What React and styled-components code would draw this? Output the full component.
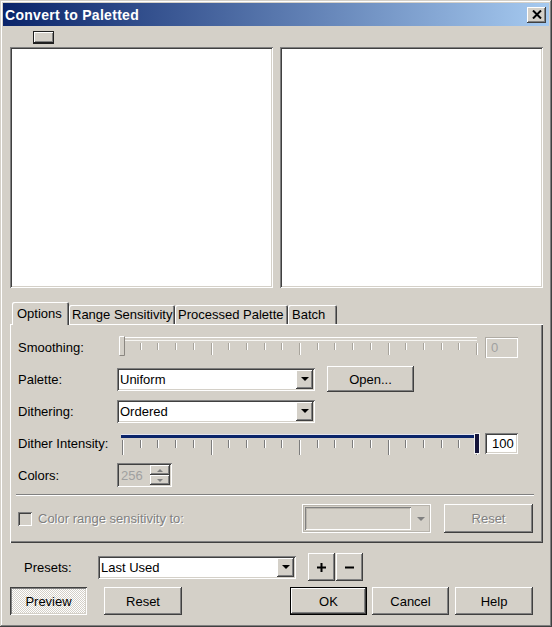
import React from "react";
import styled, { createGlobalStyle, css } from "styled-components";

const GlobalStyle = createGlobalStyle`
  html, body {
    margin: 0;
    padding: 0;
    background: #d4d0c8;
  }
  body {
    font-family: "Liberation Sans", Arial, sans-serif;
    font-size: 13px;
    color: #000;
  }
  * {
    box-sizing: border-box;
  }
`;

const raised = css`
  box-shadow: inset -1px -1px #404040, inset 1px 1px #ffffff,
    inset -2px -2px #808080, inset 2px 2px #d4d0c8;
`;

const sunken = css`
  box-shadow: inset 1px 1px #808080, inset -1px -1px #ffffff,
    inset 2px 2px #404040, inset -2px -2px #d4d0c8;
`;

const disabledText = css`
  color: #808080;
  text-shadow: 1px 1px #ffffff;
`;

const Window = styled.div`
  width: 552px;
  height: 627px;
  background: #d4d0c8;
  padding: 3px;
  display: flex;
  flex-direction: column;
  box-shadow: inset -1px -1px #404040, inset 1px 1px #d4d0c8,
    inset -2px -2px #808080, inset 2px 2px #ffffff;
`;

const TitleBar = styled.div`
  height: 23px;
  display: flex;
  align-items: center;
  justify-content: space-between;
  padding: 0 3px 0 2px;
  background: linear-gradient(to right, #0a246a, #a6caf0);
`;

const Title = styled.span`
  color: #fff;
  font-weight: bold;
  font-size: 14px;
  letter-spacing: 0.3px;
`;

const CloseButton = styled.div`
  width: 19px;
  height: 16px;
  background: #d4d0c8;
  display: flex;
  align-items: center;
  justify-content: center;
  ${raised};
`;

const Content = styled.div`
  display: flex;
  flex-direction: column;
  padding: 0 6px 0 7px;
`;

const Toolbar = styled.div`
  height: 21px;
  padding: 5px 0 0 23px;
`;

const ToggleIcon = styled.div`
  width: 21px;
  height: 13px;
  border: 1px solid #202020;
  border-bottom-width: 2px;
  background: #d4d0c8;
  box-shadow: inset 1px 1px #ffffff, inset -1px -1px #808080;
`;

const PreviewRow = styled.div`
  display: grid;
  grid-template-columns: 1fr 1fr;
  gap: 7px;
  height: 241px;
`;

const PreviewPane = styled.div`
  background: #fff;
  ${sunken};
`;

const TabStrip = styled.div`
  margin-top: 14px;
  height: 22px;
  display: flex;
  align-items: flex-end;
  padding-left: 2px;
`;

const Tab = styled.div`
  position: relative;
  z-index: ${(p) => (p.$active ? 1 : 0)};
  width: ${(p) => p.$w}px;
  height: ${(p) => (p.$active ? 23 : 19)}px;
  margin-bottom: ${(p) => (p.$active ? -1 : 0)}px;
  padding: ${(p) => (p.$active ? "0 0 1px" : "0")} ${(p) => p.$pl}px;
  display: flex;
  align-items: center;
  white-space: nowrap;
  background: #d4d0c8;
  border-radius: 2px 2px 0 0;
  box-shadow: inset 1px 1px #ffffff, inset -1px 0 #404040, inset -2px 0 #808080;
`;

const TabPanel = styled.div`
  height: 219px;
  display: flex;
  flex-direction: column;
  padding: 11px 10px 10px 8px;
  background: #d4d0c8;
  box-shadow: inset 1px 1px #ffffff, inset -1px -1px #404040,
    inset -2px -2px #808080;
`;

const FormRow = styled.div`
  display: flex;
  align-items: center;
  height: ${(p) => p.$h || 24}px;
  margin-top: ${(p) => p.$mt || 0}px;
`;

const Label = styled.span`
  width: ${(p) => p.$w}px;
  flex-shrink: 0;
  white-space: nowrap;
  ${(p) => p.$disabled && disabledText};
`;

const SliderSvg = styled.svg`
  display: block;
  flex-shrink: 0;
`;

const Edit = styled.div`
  width: 33px;
  height: 21px;
  margin-left: 3px;
  padding: 3px 0 0 ${(p) => (p.$disabled ? 6 : 7)}px;
  line-height: 15px;
  background: ${(p) => (p.$disabled ? "#d4d0c8" : "#ffffff")};
  ${(p) =>
    p.$disabled
      ? css`
          color: #a0a0a0;
          box-shadow: inset 1px 1px #b0aca4, inset -1px -1px #ffffff,
            inset 2px 2px #ffffff;
        `
      : sunken};
`;

const Combo = styled.div`
  width: ${(p) => p.$w}px;
  height: 23px;
  padding: 2px;
  display: flex;
  align-items: stretch;
  background: #fff;
  ${sunken};
`;

const ComboText = styled.span`
  flex: 1;
  padding-left: 1px;
  display: flex;
  align-items: center;
`;

const DropButton = styled.div`
  width: 17px;
  background: #d4d0c8;
  display: flex;
  align-items: center;
  justify-content: center;
  ${raised};
`;

const Arrow = styled.span`
  width: 0;
  height: 0;
  border-left: 4px solid transparent;
  border-right: 4px solid transparent;
  border-top: 4px solid ${(p) => (p.$disabled ? "#808080" : "#000")};
`;

const Button = styled.div`
  width: ${(p) => p.$w}px;
  height: ${(p) => p.$h || 28}px;
  margin-left: ${(p) => p.$ml || 0}px;
  display: flex;
  align-items: center;
  justify-content: center;
  flex-shrink: 0;
  background: #d4d0c8;
  ${raised};
  ${(p) =>
    p.$default &&
    css`
      box-shadow: inset 0 0 0 1px #000000, inset -2px -2px #404040,
        inset 2px 2px #ffffff, inset -3px -3px #808080;
    `};
  ${(p) =>
    p.$pressed &&
    css`
      background-color: #ffffff;
      background-image: repeating-conic-gradient(
        #d4d0c8 0 25%,
        #ffffff 0 50%
      );
      background-size: 2px 2px;
      box-shadow: inset 1px 1px #404040, inset -1px -1px #ffffff,
        inset 2px 2px #808080, inset -2px -2px #d4d0c8;
    `};
  ${(p) => p.$disabled && disabledText};
`;

const Spinner = styled.div`
  width: 55px;
  height: 24px;
  padding: 2px;
  display: flex;
  background: #d4d0c8;
  ${sunken};
`;

const SpinText = styled.span`
  flex: 1;
  padding-left: 2px;
  display: flex;
  align-items: center;
  color: #a0a0a0;
`;

const SpinButtons = styled.div`
  width: 20px;
  display: flex;
  flex-direction: column;
`;

const SpinButton = styled.div`
  flex: 1;
  display: flex;
  align-items: center;
  justify-content: center;
  ${raised};
`;

const SpinArrow = styled.span`
  width: 0;
  height: 0;
  border-left: 3px solid transparent;
  border-right: 3px solid transparent;
  ${(p) =>
    p.$up
      ? "border-bottom: 3px solid #808080;"
      : "border-top: 3px solid #808080;"}
`;

const Separator = styled.div`
  height: 2px;
  margin: 7px -1px 0 -2px;
  border-top: 1px solid #808080;
  border-bottom: 1px solid #ffffff;
`;

const Checkbox = styled.div`
  width: 14px;
  height: 14px;
  flex-shrink: 0;
  background: #d4d0c8;
  ${sunken};
`;

const DisabledCombo = styled.div`
  width: 129px;
  height: 29px;
  margin-left: auto;
  padding: 3px 4px 3px 3px;
  display: flex;
  align-items: center;
  gap: 6px;
  box-shadow: inset 1px 1px #ffffff, inset -1px -1px #ffffff,
    inset 2px 2px #b8b4ac, inset -2px -2px #b8b4ac;
`;

const DisabledField = styled.div`
  width: 106px;
  height: 23px;
  box-shadow: inset 1px 1px #808080, inset -1px -1px #ffffff,
    inset 2px 2px #b8b4ac;
`;

const PresetsRow = styled.div`
  margin-top: 10px;
  height: 28px;
  padding-left: 14px;
  display: flex;
  align-items: center;
`;

const ButtonRow = styled.div`
  margin-top: 6px;
  height: 28px;
  padding-right: 10px;
  display: flex;
  align-items: center;
`;

const Spacer = styled.div`
  flex: 1;
`;

const TICKS = Array.from({ length: 21 }, (_, i) => 5 + i * 17.7);

function Slider({ enabled }) {
  const top = enabled ? 9 : 8;
  return (
    <SliderSvg width="365" height="24" viewBox="0 0 365 24">
      {enabled ? (
        <>
          <line x1="4" y1="3.5" x2="360" y2="3.5" stroke="#e4e4ee" />
          <rect x="4" y="4" width="355" height="3" fill="#0a246a" />
        </>
      ) : (
        <>
          <line x1="5" y1="2.5" x2="360" y2="2.5" stroke="#ffffff" />
          <line x1="5" y1="5.5" x2="360" y2="5.5" stroke="#f6f5f2" />
        </>
      )}
      {TICKS.map((x, i) => {
        const major = i % 5 === 0;
        const bottom = enabled ? (major ? 24 : 17) : major ? 20 : 15;
        const px = Math.round(x) + 0.5;
        return (
          <g key={i}>
            <line
              x1={px}
              y1={top}
              x2={px}
              y2={bottom}
              stroke={enabled ? "#7c7c7c" : "#a8a49c"}
            />
            <line x1={px + 1} y1={top} x2={px + 1} y2={bottom} stroke="#ffffff" />
          </g>
        );
      })}
      {enabled ? (
        <>
          <rect x="357" y="2" width="6" height="21" fill="#f0f0f0" />
          <rect x="358" y="3" width="4" height="19" fill="#14143a" />
        </>
      ) : (
        <>
          <rect x="2" y="1" width="6" height="20" fill="#d4d0c8" />
          <polyline points="2.5,20.5 2.5,1.5 7.5,1.5" fill="none" stroke="#ffffff" />
          <polyline points="7.5,1.5 7.5,20.5 2.5,20.5" fill="none" stroke="#8a8680" />
        </>
      )}
    </SliderSvg>
  );
}

export default function App() {
  return (
    <>
      <GlobalStyle />
      <Window>
        <TitleBar>
          <Title>Convert to Paletted</Title>
          <CloseButton>
            <svg width="10" height="9" viewBox="0 0 10 9">
              <path d="M1 0.5 L9 8.5 M9 0.5 L1 8.5" stroke="#000" strokeWidth="2" />
            </svg>
          </CloseButton>
        </TitleBar>

        <Content>
          <Toolbar>
            <ToggleIcon />
          </Toolbar>

          <PreviewRow>
            <PreviewPane />
            <PreviewPane />
          </PreviewRow>

          <TabStrip>
            <Tab $active $w={57} $pl={5}>
              Options
            </Tab>
            <Tab $w={106} $pl={3}>
              Range Sensitivity
            </Tab>
            <Tab $w={113} $pl={3}>
              Processed Palette
            </Tab>
            <Tab $w={49} $pl={4}>
              Batch
            </Tab>
          </TabStrip>

          <TabPanel>
            <FormRow>
              <Label $w={99}>Smoothing:</Label>
              <Slider />
              <Edit $disabled>0</Edit>
            </FormRow>

            <FormRow $mt={8}>
              <Label $w={99}>Palette:</Label>
              <Combo $w={198}>
                <ComboText>Uniform</ComboText>
                <DropButton>
                  <Arrow />
                </DropButton>
              </Combo>
              <Button $w={87} $h={26} $ml={12}>
                Open...
              </Button>
            </FormRow>

            <FormRow $mt={8}>
              <Label $w={99}>Dithering:</Label>
              <Combo $w={198}>
                <ComboText>Ordered</ComboText>
                <DropButton>
                  <Arrow />
                </DropButton>
              </Combo>
            </FormRow>

            <FormRow $mt={8}>
              <Label $w={99}>Dither Intensity:</Label>
              <Slider enabled />
              <Edit>100</Edit>
            </FormRow>

            <FormRow $mt={8}>
              <Label $w={99}>Colors:</Label>
              <Spinner>
                <SpinText>256</SpinText>
                <SpinButtons>
                  <SpinButton>
                    <SpinArrow $up />
                  </SpinButton>
                  <SpinButton>
                    <SpinArrow />
                  </SpinButton>
                </SpinButtons>
              </Spinner>
            </FormRow>

            <Separator />

            <FormRow $mt={8} $h={29}>
              <Checkbox />
              <Label $disabled style={{ marginLeft: 6 }}>
                Color range sensitivity to:
              </Label>
              <DisabledCombo>
                <DisabledField />
                <Arrow $disabled />
              </DisabledCombo>
              <Button $w={89} $h={29} $ml={13} $disabled>
                Reset
              </Button>
            </FormRow>
          </TabPanel>

          <PresetsRow>
            <Label $w={74}>Presets:</Label>
            <Combo $w={198}>
              <ComboText>Last Used</ComboText>
              <DropButton>
                <Arrow />
              </DropButton>
            </Combo>
            <Button $w={27} $ml={12}>
              <svg width="9" height="9" viewBox="0 0 9 9">
                <path d="M0 4.5 H9 M4.5 0 V9" stroke="#000" strokeWidth="2" />
              </svg>
            </Button>
            <Button $w={27} $ml={1}>
              <svg width="9" height="9" viewBox="0 0 9 9">
                <path d="M0 4.5 H9" stroke="#000" strokeWidth="2" />
              </svg>
            </Button>
          </PresetsRow>

          <ButtonRow>
            <Button $w={77} $pressed>
              Preview
            </Button>
            <Button $w={78} $ml={17}>
              Reset
            </Button>
            <Spacer />
            <Button $w={77} $default>
              OK
            </Button>
            <Button $w={77} $ml={5}>
              Cancel
            </Button>
            <Button $w={78} $ml={6}>
              Help
            </Button>
          </ButtonRow>
        </Content>
      </Window>
    </>
  );
}
